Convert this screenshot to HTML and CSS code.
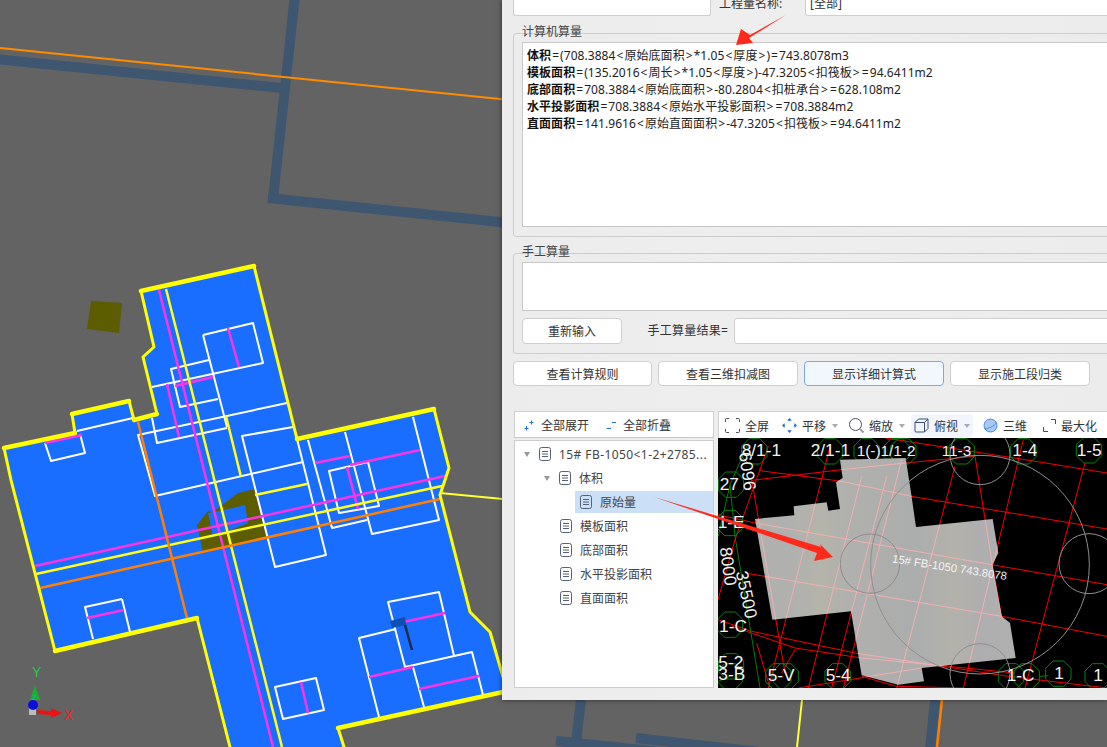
FILE: index.html
```html
<!DOCTYPE html>
<html lang="zh-CN">
<head>
<meta charset="utf-8">
<title>工程量计算式</title>
<link rel="stylesheet" href="styles.css">
</head>
<body>
<svg class="scene" viewBox="0 0 1107 747" width="1107" height="747">
  <g class="bg-beam">
    <path d="M-5 59 L281 88"/>
    <path d="M295 -5 L273 199"/>
    <path d="M268 198 L510 223"/>
    <path d="M581 700 L576 742"/>
    <path d="M556 741 L740 760"/>
    <path d="M636 738 L760 752"/>
    <path d="M935 700 L930 750"/>
  </g>
  <path class="bg-orange" d="M0 48 L510 100"/>
  <path class="y2" d="M802 700 L797 747"/>
  <path class="o3" d="M942 700 L937 747"/>
  <polygon class="olive" points="91,301 122,303 119,333 87,329"/>
  <polygon class="slab" points="141,291 254,266 297,439 434,409 449,468 440,495 470,612 490,632 503,677 503,692 338,728 344,747 230,747 197,618 55,651 11,480 4,448 75,433 72,414 129,401 134,420 157,414 143,357 154,347"/>
  <path class="olive" fill-rule="evenodd" d="M197 525 L208 511 L213 512 L238 493 L255 489 L267 537 L203 553 Z M224 510 L245 505 L248 523 L213 537 L208 513 Z"/>
  <g class="white-lines">
    <path d="M203 335 L253 323 L263 363 L152 387"/>
    <path d="M203 335 L227 427"/>
    <path d="M209 360 L171 369 L180 407 L218 399"/>
    <path d="M152 418 L157 443 L227 428"/>
    <path d="M287 403 L138 435 L155 496 L303 462"/>
    <path d="M293 427 L242 436 L275 567 L326 555 L297 439"/>
    <path d="M77 431 L133 418"/>
    <path d="M80 434 L85 453 L51 461 L45 443"/>
    <path d="M122 599 L85 607 L93 639 M122 599 L130 632"/>
    <path d="M275 687 L316 678 L324 710 L283 719 Z"/>
    <path d="M308 440 L332 528 L367 520"/>
    <path d="M345 432 L372 534 L439 520 L413 417"/>
    <path d="M329 471 L368 462 L379 506 L339 513 Z"/>
    <path d="M454 656 L439 592 L388 602 L405 667 L472 652 L483 695"/>
    <path d="M396 629 L359 638 L379 717"/>
    <path d="M413 667 L424 707"/>
  </g>
  <g class="m3">
    <path d="M159 290 L273 747"/>
    <path d="M35 566 L445 476"/>
    <path d="M167 384 L179 437"/>
    <path d="M175 386 L213 377"/>
    <path d="M228 328 L239 367"/>
    <path d="M87 618 L124 610"/>
    <path d="M301 682 L308 713"/>
    <path d="M347 467 L358 509"/>
    <path d="M315 463 L350 456"/>
    <path d="M350 465 L420 450"/>
    <path d="M369 677 L413 667"/>
    <path d="M419 689 L479 676"/>
    <path d="M394 624 L445 613"/>
    <path d="M45 443 L82 435"/>
  </g>
  <g class="y3">
    <path d="M166 289 L282 747"/>
    <path d="M36 574 L442 486"/>
    <path d="M226 416 L241 477"/>
    <path d="M255 495 L307 484"/>
  </g>
  <g class="o3">
    <path d="M138 422 L187 618"/>
    <path d="M40 588 L440 499"/>
  </g>
  <path class="y2" d="M440 493 L503 499"/>
  <g class="outline">
    <path d="M254 266 L297 439"/>
    <path d="M434 409 L449 468 L440 495 L470 612 L490 632 L503 677"/>
    <path d="M197 618 L230 747"/>
    <path d="M55 651 L11 480 L4 448"/>
    <path d="M141 291 L154 347 L143 357 L157 414"/>
    <path d="M129 401 L134 420"/>
    <path d="M75 433 L72 414"/>
    <path d="M338 728 L344 747"/>
  </g>
  <g class="outline-thick">
    <path d="M141 291 L254 266"/>
    <path d="M297 439 L434 409"/>
    <path d="M4 448 L75 433"/>
    <path d="M72 414 L129 401"/>
    <path d="M134 420 L157 414"/>
    <path d="M55 651 L197 618"/>
    <path d="M338 728 L503 692"/>
  </g>
  <path class="dark-stroke" d="M405 625 L412 650"/>
  <polygon class="dark-blue" points="390,621 405,617 406,625 392,628"/>
  <g class="axis">
    <text class="axis-y" x="32" y="677">Y</text>
    <polygon class="axis-green" points="35,685 40,700 30,700"/>
    <text class="axis-z" x="32" y="700">Z</text>
    <rect class="axis-box" x="29" y="708" width="7" height="7"/>
    <circle class="axis-blue" cx="33" cy="705" r="5"/>
    <polygon class="axis-red" points="37,710 51,711 51,708 62,713 51,718 51,715 37,714"/>
    <text class="axis-x" x="64" y="720">X</text>
  </g>
</svg>

<main class="dialog">
  <div class="top-row">
    <div class="field top-left"></div>
    <span class="top-label">工程量名称:</span>
    <div class="field top-right">[全部]</div>
  </div>

  <section class="group group-auto">
    <span class="group-title">计算机算量</span>
    <div class="memo">
      <p><b>体积</b><i>=</i>(708.3884<i>&lt;</i>原始底面积<i>&gt;</i>*1.05<i>&lt;</i>厚度<i>&gt;</i>)<i>=</i>743.8078m3</p>
      <p><b>模板面积</b><i>=</i>(135.2016<i>&lt;</i>周长<i>&gt;</i>*1.05<i>&lt;</i>厚度<i>&gt;</i>)-47.3205<i>&lt;</i>扣筏板<i>&gt;</i><i>=</i>94.6411m2</p>
      <p><b>底部面积</b><i>=</i>708.3884<i>&lt;</i>原始底面积<i>&gt;</i>-80.2804<i>&lt;</i>扣桩承台<i>&gt;</i><i>=</i>628.108m2</p>
      <p><b>水平投影面积</b><i>=</i>708.3884<i>&lt;</i>原始水平投影面积<i>&gt;</i><i>=</i>708.3884m2</p>
      <p><b>直面面积</b><i>=</i>141.9616<i>&lt;</i>原始直面面积<i>&gt;</i>-47.3205<i>&lt;</i>扣筏板<i>&gt;</i><i>=</i>94.6411m2</p>
    </div>
  </section>

  <section class="group group-manual">
    <span class="group-title">手工算量</span>
    <div class="memo memo-short"></div>
    <div class="manual-row">
      <button class="btn btn-reset">重新输入</button>
      <label class="manual-label">手工算量结果=</label>
      <div class="field manual-input"></div>
    </div>
  </section>

  <div class="btn-row">
    <button class="btn btn-wide">查看计算规则</button>
    <button class="btn btn-wide">查看三维扣减图</button>
    <button class="btn btn-wide btn-active">显示详细计算式</button>
    <button class="btn btn-wide">显示施工段归类</button>
  </div>

  <div class="panels">
    <div class="left-col">
      <div class="tool-left">
        <span class="tool-item">
          <svg class="ic-sm" viewBox="0 0 11 11"><path d="M7.500 0.500v4M5.500 2.500h4M2.500 6v4.500M0.500 8.500h4"/></svg>全部展开
        </span>
        <span class="tool-item">
          <svg class="ic-sm" viewBox="0 0 11 11"><path d="M6 2.500h4M0.500 8.500h4.500"/></svg>全部折叠
        </span>
      </div>
      <div class="tree">
        <div class="row lv0"><i class="caret"></i><svg class="doc"><use href="#doc"/></svg><span class="row-title">15# FB-1050&lt;1-2+2785...</span></div>
        <div class="row lv1"><i class="caret"></i><svg class="doc"><use href="#doc"/></svg><span>体积</span></div>
        <div class="row lv2 selected"><svg class="doc"><use href="#doc"/></svg><span>原始量</span></div>
        <div class="row lv1 leaf"><svg class="doc"><use href="#doc"/></svg><span>模板面积</span></div>
        <div class="row lv1 leaf"><svg class="doc"><use href="#doc"/></svg><span>底部面积</span></div>
        <div class="row lv1 leaf"><svg class="doc"><use href="#doc"/></svg><span>水平投影面积</span></div>
        <div class="row lv1 leaf"><svg class="doc"><use href="#doc"/></svg><span>直面面积</span></div>
      </div>
    </div>

    <div class="right-col">
      <div class="tool-right">
        <span class="tb tb-full"><svg class="ic" viewBox="0 0 15 15"><path d="M0.500 4V1.500a1 1 0 0 1 1-1H4M11 0.500h2.500a1 1 0 0 1 1 1V4M14.500 11v2.500a1 1 0 0 1-1 1H11M4 14.500H1.500a1 1 0 0 1-1-1V11"/></svg>全屏</span>
        <span class="tb tb-pan"><svg class="ic ic-blue" viewBox="0 0 15 15"><path d="M5.800 2.600 7.500 0.800 9.200 2.600M5.800 12.400 7.500 14.200 9.200 12.400M2.600 5.800 0.800 7.500 2.600 9.200M12.400 5.800 14.200 7.500 12.400 9.200M7.500 1v2M7.500 12v2M1 7.500h2M12 7.500h2"/></svg>平移<i class="tb-caret"></i></span>
        <span class="tb tb-zoom"><svg class="ic" viewBox="0 0 15 15"><circle cx="6.500" cy="6.500" r="6"/><path class="ic-light" d="M11 11 14.500 14.500"/></svg>缩放<i class="tb-caret"></i></span>
        <span class="tb tb-top"><svg class="ic ic-cube" viewBox="0 0 15 15"><path d="M1 4.500h9.500v9.500h-8.500a1 1 0 0 1-1-1zM1 4.500 4.500 1H14v9.500L10.500 14M10.500 4.500 14 1"/></svg>俯视<i class="tb-caret"></i></span>
        <span class="tb tb-3d"><svg class="ic ic-sphere" viewBox="0 0 15 15"><circle cx="7.500" cy="7.500" r="6.500"/><path d="M1.500 10.500C6 11 11 8 13.500 4.500"/></svg>三维</span>
        <span class="tb tb-max"><svg class="ic ic-max" viewBox="0 0 13 13"><path d="M8 0.500h4.500v4.500M0.500 8v4.500H5"/></svg>最大化</span>
      </div>

      <svg class="cad" viewBox="9 85 1167 750" width="389" height="250">
        <defs>
          <linearGradient id="slabfill" x1="120" y1="0" x2="902" y2="0" gradientUnits="userSpaceOnUse">
            <stop offset="0" stop-color="#b0b0b0"/>
            <stop offset="0.14" stop-color="#b0b0af"/>
            <stop offset="0.25" stop-color="#b4b4aa"/>
            <stop offset="0.36" stop-color="#b0b0ae"/>
            <stop offset="0.50" stop-color="#aeaeac"/>
            <stop offset="0.62" stop-color="#abadae"/>
            <stop offset="0.76" stop-color="#b3b2aa"/>
            <stop offset="0.86" stop-color="#aeaeb0"/>
            <stop offset="1" stop-color="#b0b0b0"/>
          </linearGradient>
          <clipPath id="shapeclip">
            <polygon points="120,328 238,317 236,290 335,278 340,303 375,298 363,218 383,205 375,150 572,145 590,262 603,352 833,328 850,430 832,465 860,620 885,640 902,745 620,775 627,815 550,825 440,797 408,605 172,630"/>
          </clipPath>
          <polygon id="oct" points="-16,-38 16,-38 38,-16 38,16 16,38 -16,38 -38,16 -38,-16"/>
          <g id="gridlines">
            <path d="M110 212 L380 180 L570 160 L780 140"/>
            <path d="M135 183 L380 215 L600 262 L1176 358"/>
            <path d="M9 315 L120 340 L830 465 L1176 525"/>
            <path d="M90 490 L860 620 L1176 680"/>
            <path d="M510 85 L930 150 L1176 190"/>
            <path d="M9 630 L110 665 L420 730 L880 800 L1176 835"/>
            <path d="M50 650 L240 715 L440 745 L700 770 L900 790"/>
            <path d="M250 835 L620 775 M440 800 L545 830 L745 835"/>
            <path d="M160 110 L60 390 L9 570"/>
            <path d="M345 110 L160 835"/>
            <path d="M440 200 L280 835"/>
            <path d="M515 200 L350 835"/>
            <path d="M560 150 L385 835"/>
            <path d="M720 170 L545 835"/>
            <path d="M925 90 L745 835"/>
            <path d="M1110 160 L930 835"/>
            <path d="M780 140 L832 465 L860 620"/>
            <path d="M110 210 L210 790"/>
            <path d="M240 720 L200 790 M125 700 L165 835"/>
          </g>
        </defs>
        <rect class="cad-bg" x="9" y="85" width="1167" height="750"/>
        <use href="#gridlines" class="red-lines"/>
        <g class="green-lines">
          <path d="M45 225 L60 380 L135 835"/>
          <path d="M45 800 L10 815 M975 800 L1000 798"/>
          <path d="M100 100 L45 225 L10 380"/>
        </g>
        <g class="octa">
          <use href="#oct" x="118" y="125"/><use href="#oct" x="345" y="125"/><use href="#oct" x="455" y="125"/>
          <use href="#oct" x="545" y="125"/><use href="#oct" x="565" y="125"/><use href="#oct" x="740" y="125"/>
          <use href="#oct" x="925" y="125"/><use href="#oct" x="1122" y="122"/><use href="#oct" x="48" y="225"/>
          <use href="#oct" x="45" y="340"/><use href="#oct" x="45" y="645"/><use href="#oct" x="48" y="770"/>
          <use href="#oct" x="45" y="800"/><use href="#oct" x="190" y="800"/><use href="#oct" x="212" y="800"/>
          <use href="#oct" x="368" y="800"/><use href="#oct" x="888" y="800"/><use href="#oct" x="935" y="800"/>
          <use href="#oct" x="1030" y="792"/><use href="#oct" x="1148" y="800"/>
        </g>
        <polygon class="cad-shape" points="120,328 238,317 236,290 335,278 340,303 375,298 363,218 383,205 375,150 572,145 590,262 603,352 833,328 850,430 832,465 860,620 885,640 902,745 620,775 627,815 550,825 440,797 408,605 172,630"/>
        <g clip-path="url(#shapeclip)"><use href="#gridlines" class="pink-lines"/></g>
        <g class="gray-circles">
          <circle cx="795" cy="465" r="328"/>
          <circle cx="795" cy="135" r="90"/>
          <circle cx="1122" cy="462" r="90"/>
          <circle cx="795" cy="792" r="90"/>
        </g>
        <circle class="gray-circle-dark" cx="465" cy="462" r="89"/>
        <g class="cad-text">
          <text x="80" y="140">8/1-1</text>
          <text x="287" y="140">2/1-1</text>
          <text class="cad-mid" x="425" y="140">1(-)1/1-2</text>
          <text class="cad-mid" x="680" y="140">11-3</text>
          <text x="892" y="140">1-4</text>
          <text x="1085" y="140">1-5</text>
          <text x="14" y="242">27</text>
          <text x="8" y="355">1-E</text>
          <text x="12" y="668">1-C</text>
          <text x="10" y="775">5-2</text>
          <text x="10" y="812">3-B</text>
          <text x="158" y="815">5-V</text>
          <text x="332" y="815">5-4</text>
          <text x="875" y="815">1-C</text>
          <text x="1018" y="808">1</text>
          <text x="1135" y="815">1</text>
          <text transform="translate(72 130) rotate(82)">6096</text>
          <text transform="translate(14 415) rotate(82)">8000</text>
          <text transform="translate(62 488) rotate(78)">35500</text>
          <text class="cad-label" transform="translate(530 458) rotate(8.800)">15# FB-1050 743.8078</text>
        </g>
      </svg>
    </div>
  </div>
</main>

<svg class="overlay" viewBox="0 0 1107 747" width="1107" height="747">
  <polygon class="arrow" points="654,497 821,547 820,544 833,557 814,561 817,553"/>
  <polygon class="arrow" points="786,15 750,35 741,29 736,45 753,43 749,38"/>
</svg>

<svg class="sprite" width="0" height="0">
  <symbol id="doc" viewBox="0 0 12 14">
    <rect x="0.500" y="0.500" width="11" height="13" rx="2"/>
    <path d="M3 4.500h6M3 7h6M3 9.500h6"/>
  </symbol>
</svg>
</body>
</html>
```

FILE: styles.css
```css
* { box-sizing: border-box; }
html, body { margin: 0; height: 100%; overflow: hidden; }
body {
  position: relative;
  width: 1107px;
  height: 747px;
  background: #636363;
  font-family: "Noto Sans", "Noto Sans CJK SC", sans-serif;
  font-size: 12px;
  color: #333;
}
p { margin: 0; }

/* 3D scene behind the window */
.scene { position: absolute; left: 0; top: 0; display: block; }
.scene path, .overlay polygon { fill: none; }
.bg-beam path { stroke: #3f5670; stroke-width: 10; fill: none; }
.bg-orange { stroke: #ff8c00; stroke-width: 2; }
.slab { fill: #1a6eff; }
.scene .olive { fill: #5c5c00; }
.white-lines path { stroke: #fff; stroke-width: 2; stroke-linejoin: round; }
.m3 path { stroke: #ff33e6; stroke-width: 2.500; }
.y3 path { stroke: #ffff1a; stroke-width: 2.500; }
.y2 { stroke: #ffff33; stroke-width: 2; }
.o3 path, path.o3 { stroke: #ff8000; stroke-width: 2.500; }
.outline path { stroke: #ffff00; stroke-width: 3; stroke-linejoin: round; stroke-linecap: round; }
.outline-thick path { stroke: #ffff00; stroke-width: 4.500; stroke-linecap: round; }
.dark-stroke { stroke: #1c2c4a; stroke-width: 2.500; }
.dark-blue { fill: #0f4fb0; }
.axis text { font-family: "Liberation Sans", sans-serif; }
.axis-y { font-size: 14px; fill: #22cc44; }
.axis-x { font-size: 14px; fill: #ee2222; }
.axis-z { font-size: 8px; fill: #22a0ff; }
.axis-green { fill: #18b030; }
.axis-box { fill: #bbb; }
.axis-blue { fill: #0a10d8; }
.axis-red { fill: #ee1111; }

/* Window */
.dialog {
  position: absolute;
  left: 502px;
  top: 0;
  width: 605px;
  height: 700px;
  overflow: hidden;
  padding-left: 11px;
  background: linear-gradient(90deg, #ececec, #eeeeee 40%, #ececec);
  box-shadow: 0 0 5px rgba(0, 0, 0, .55);
}
.field {
  background: #fff;
  border: 1px solid #cfcfcf;
  border-radius: 3px;
}
.top-row { display: flex; height: 16px; align-items: stretch; }
.top-left { width: 198px; border-top: 0; border-radius: 0 0 3px 3px; }
.top-label { margin: -5px 0 0 8px; width: 86px; line-height: 17px; }
.top-right {
  flex: 1;
  margin-right: -20px;
  padding-left: 4px;
  border-top: 0;
  border-radius: 0 0 3px 3px;
  line-height: 8px;
  overflow: hidden;
}

.group {
  position: relative;
  margin-right: -20px;
  padding: 8px;
  border: 1px solid #cccccc;
  border-radius: 3px;
}
.group-auto { margin-top: 17px; height: 204px; }
.group-manual { margin-top: 16px; height: 101px; }
.group-title {
  position: absolute;
  left: 8px;
  top: -11px;
  line-height: 17px;
  color: #444;
}
.memo {
  height: 185px;
  padding: 4px 4px;
  background: #fff;
  border: 1px solid #c8c8c8;
  line-height: 17px;
  color: #222;
  white-space: nowrap;
  letter-spacing: .06px;
}
.memo b { font-weight: 700; color: #111; }
.memo i { font-style: normal; padding: 0 1px; }
.memo-short { height: 49px; }

.btn {
  display: block;
  padding: 0;
  font: inherit;
  color: #333;
  background: #fff;
  border: 1px solid #cfcfcf;
  border-radius: 4px;
}
.manual-row { display: flex; align-items: stretch; height: 26px; margin-top: 7px; }
.btn-reset { width: 100px; }
.manual-label { width: 112px; line-height: 26px; text-align: right; padding-right: 6px; color: #333; letter-spacing: .25px; }
.manual-input { flex: 1; }

.btn-row { display: flex; gap: 6px; margin-top: 7px; height: 25px; }
.btn-wide { width: 140px; }
.btn-wide:first-child { width: 139px; }
.btn-active { background: #f2f7fd; border-color: #7aa9e6; }

.panels { display: flex; gap: 4px; margin: 25px -20px 0 1px; height: 277px; }
.left-col { display: flex; flex-direction: column; width: 200px; }
.tool-left {
  display: flex;
  align-items: center;
  gap: 17px;
  height: 27px;
  padding: 1px 0 0 9px;
  background: #fff;
  border: 1px solid #d0d0d0;
  border-bottom: 1px solid #c8c8c8;
}
.tool-item { display: flex; align-items: center; gap: 6px; color: #333; }
.ic-sm { width: 11px; height: 11px; fill: none; stroke: #1f6fe0; stroke-width: 1; }

.tree {
  margin-top: 2px;
  height: 248px;
  padding-top: 1px;
  background: #fff;
  border: 1px solid #cdcdcd;
  white-space: nowrap;
  overflow: hidden;
}
.row { position: relative; display: flex; align-items: center; height: 24px; color: #444; }
.row span { margin-left: 8px; }
.row .row-title { letter-spacing: .42px; }
.doc { width: 12px; height: 14px; fill: none; stroke: #56607a; stroke-width: 1; flex: none; }
.caret {
  width: 0; height: 0;
  margin-right: 9px;
  border-left: 3.500px solid transparent;
  border-right: 3.500px solid transparent;
  border-top: 5px solid #999;
  flex: none;
}
.lv0 { padding-left: 9px; }
.lv1 { padding-left: 29px; }
.lv1.leaf { padding-left: 45px; }
.lv2 { padding-left: 65px; }
.selected { background: linear-gradient(#fff 1px, #cbe0f7 1px, #cbe0f7 23px, #fff 23px); margin-left: 60px; padding-left: 5px; }

.right-col { flex: 1; display: flex; flex-direction: column; min-width: 0; }
.tool-right {
  display: flex;
  align-items: center;
  height: 27px;
  padding: 1px 0 0 6px;
  background: #fff;
  border: 1px solid #d0d0d0;
  border-bottom: 0;
}
.tb { display: flex; align-items: center; gap: 5px; height: 23px; color: #333; flex: none; }
.ic { width: 15px; height: 15px; fill: none; stroke: #4a4f5a; stroke-width: 1; flex: none; }
.ic-light { stroke: #9aa0a8; stroke-width: 2; }
.ic-blue { stroke: #1f7be8; stroke-width: 1.200; }
.ic-cube { stroke: #3a4f70; }
.ic-sphere { fill: #a9c9f2; stroke: #4a8fe0; }
.ic-max { width: 13px; height: 13px; }
.tb-caret {
  width: 0; height: 0;
  margin-left: 1px;
  border-left: 3px solid transparent;
  border-right: 3px solid transparent;
  border-top: 4px solid #aaa;
}
.tb-pan { margin-left: 13px; }
.tb-zoom { margin-left: 11px; }
.tb-top { margin-left: 6px; padding: 0 3px; background: #f2f6fc; border-radius: 4px; }
.tb-3d { margin-left: 10px; }
.tb-max { margin-left: 16px; }

.cad { display: block; flex: none; }
.cad-bg { fill: #000; }
.red-lines { fill: none; stroke: #f40000; stroke-width: 3; }
.pink-lines { fill: none; stroke: #f2b0ae; stroke-width: 3; }
.green-lines path { fill: none; stroke: #0a7a0a; stroke-width: 3; }
.octa use { fill: none; stroke: #0a800a; stroke-width: 3; }
.cad-shape { fill: url(#slabfill); }
.gray-circles circle { fill: none; stroke: #8f8f8f; stroke-width: 3; }
.gray-circle-dark { fill: none; stroke: #8c8c8c; stroke-width: 3; }
.cad-text text { font-family: "Liberation Sans", sans-serif; font-size: 52px; fill: #f2f2f2; }
.cad-text .cad-mid { font-size: 46px; }
.cad-text .cad-label { font-size: 34px; }

.overlay { position: absolute; left: 0; top: 0; display: block; pointer-events: none; }
.overlay .arrow { fill: #ff2a1c; }
.sprite { position: absolute; }
```
